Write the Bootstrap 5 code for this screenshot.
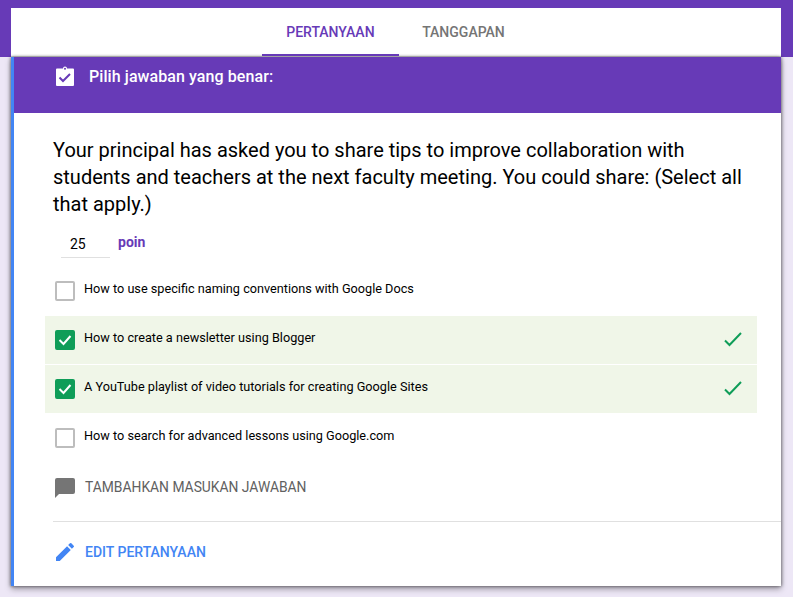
<!DOCTYPE html>
<html lang="id">
<head>
<meta charset="utf-8">
<title>Pertanyaan</title>
<link rel="stylesheet" href="https://cdn.jsdelivr.net/npm/bootstrap@5.3.0/dist/css/bootstrap.min.css">
<style>
html,body{height:100%;overflow:hidden}
body{background:#ede7f6;font-family:Roboto,"Liberation Sans",sans-serif;color:#000}
.topband{background:#673ab7;padding:8px 12px 0 11px}
.tabbar{background:#fff;height:49px;border-bottom:1px solid #dadada}
.tabbar .nav-link{height:48px;padding:0 25px 0 23px;line-height:48px;font-size:14px;font-weight:500;color:#757575;border-bottom:2px solid transparent;box-sizing:border-box}
.tabbar .nav-link.active{color:#673ab7;border-bottom-color:#673ab7;width:137px;padding:0 0 0 24px;text-align:left}
.qcard{margin:0 12px 0 11px;background:#fff;border-left:3px solid #4285f4;box-shadow:0 3px 6px rgba(0,0,0,.35),1px 0 3px rgba(0,0,0,.3),-1px 0 3px rgba(0,0,0,.3);height:529px}
.qhead{background:#673ab7;color:#fff;height:56px;padding:9px 0 0 42px;font-size:16px;font-weight:500;gap:15px;letter-spacing:.08px}
.headlabel{padding-top:3px;line-height:1}
.qtext{font-size:20px;line-height:27px;padding:24px 20px 0 39px;margin:0}
.pts{padding:13px 0 0 47px;height:44px}
.ptsval{width:49px;height:27px;border-bottom:1px solid #e0e0e0;font-size:14px;padding:4px 0 0 9px;line-height:18px;box-sizing:border-box}
.ptslabel{font-size:14px;font-weight:700;color:#673ab7;margin-left:8px;line-height:18px;padding-top:2px}
.optlist{margin:5px 24px 0 31px}
.opt{height:48px;padding:0 14px 0 10px;margin-bottom:1px;font-size:12.7px;gap:9px}
.opt.good{background:#f0f6e8}
.opt span{position:relative;top:-2px;flex:1}
.box{width:20px;height:20px;border:2px solid #bdbdbd;border-radius:2px;flex:none}
.box.on{background:#0f9d58;border-color:#0f9d58;display:flex;align-items:center;justify-content:center}
.addfb{padding:0 0 0 41px;height:49px;font-size:13.85px;color:#616161;gap:10px}
.rule{margin:9px 0 0 39px;border-top:1px solid #e0e0e0}
.editq{padding:20px 0 0 41px;font-size:14px;font-weight:500;color:#4285f4;gap:10px;line-height:20px}
</style>
</head>
<body>
<div class="topband">
  <nav class="tabbar">
    <ul class="nav justify-content-center">
      <li class="nav-item"><a class="nav-link active" href="#">PERTANYAAN</a></li>
      <li class="nav-item"><a class="nav-link" href="#">TANGGAPAN</a></li>
    </ul>
  </nav>
</div>
<main class="qcard">
  <div class="qhead d-flex align-items-start">
    <svg width="18" height="20" viewBox="1 0 18 20" aria-hidden="true"><path fill="#fff" d="M8 2.500a2 2 0 0 1 4 0H18a1 1 0 0 1 1 1V19a1 1 0 0 1-1 1H2a1 1 0 0 1-1-1V3.500a1 1 0 0 1 1-1z"/><circle cx="10" cy="2.800" r="1" fill="#673ab7"/><path fill="none" stroke="#673ab7" stroke-width="2" d="M4.500 11.500l3.500 3.500 7-7"/></svg>
    <div class="headlabel">Pilih jawaban yang benar:</div>
  </div>
  <p class="qtext">Your principal has asked you to share tips to improve collaboration with students and teachers at the next faculty meeting. You could share: (Select all that apply.)</p>
  <div class="pts d-flex align-items-start">
    <div class="ptsval">25</div>
    <div class="ptslabel">poin</div>
  </div>
  <div class="optlist">
    <div class="opt d-flex align-items-center"><div class="box"></div><span>How to use specific naming conventions with Google Docs</span></div>
    <div class="opt good d-flex align-items-center"><div class="box on"><svg width="16" height="16" viewBox="0 0 16 16"><path fill="none" stroke="#fff" stroke-width="2" d="M2.500 8l4 4 7-8"/></svg></div><span>How to create a newsletter using Blogger</span><svg width="20" height="20" viewBox="0 0 20 20"><path fill="none" stroke="#0f9d58" stroke-width="2" d="M2 10.500l4.500 4.500 11.500-12"/></svg></div>
    <div class="opt good d-flex align-items-center"><div class="box on"><svg width="16" height="16" viewBox="0 0 16 16"><path fill="none" stroke="#fff" stroke-width="2" d="M2.500 8l4 4 7-8"/></svg></div><span>A YouTube playlist of video tutorials for creating Google Sites</span><svg width="20" height="20" viewBox="0 0 20 20"><path fill="none" stroke="#0f9d58" stroke-width="2" d="M2 10.500l4.500 4.500 11.500-12"/></svg></div>
    <div class="opt d-flex align-items-center"><div class="box"></div><span>How to search for advanced lessons using Google.com</span></div>
  </div>
  <div class="addfb d-flex align-items-center">
    <svg width="20" height="20" viewBox="0 0 20 20"><path fill="#757575" d="M2 0h16a2 2 0 0 1 2 2v12a2 2 0 0 1-2 2H4l-4 4V2a2 2 0 0 1 2-2z"/></svg>
    <div>TAMBAHKAN MASUKAN JAWABAN</div>
  </div>
  <div class="rule"></div>
  <div class="editq d-flex align-items-center">
    <svg width="20" height="20" viewBox="0 0 20 20"><path fill="#4285f4" d="M1 15.250V19h3.750L15.810 7.940l-3.750-3.750zM18.710 5.040a1 1 0 0 0 0-1.410l-2.340-2.340a1 1 0 0 0-1.410 0l-1.830 1.830 3.750 3.750z"/></svg>
    <div>EDIT PERTANYAAN</div>
  </div>
</main>
<script src="https://cdn.jsdelivr.net/npm/bootstrap@5.3.0/dist/js/bootstrap.bundle.min.js"></script>
</body>
</html>
